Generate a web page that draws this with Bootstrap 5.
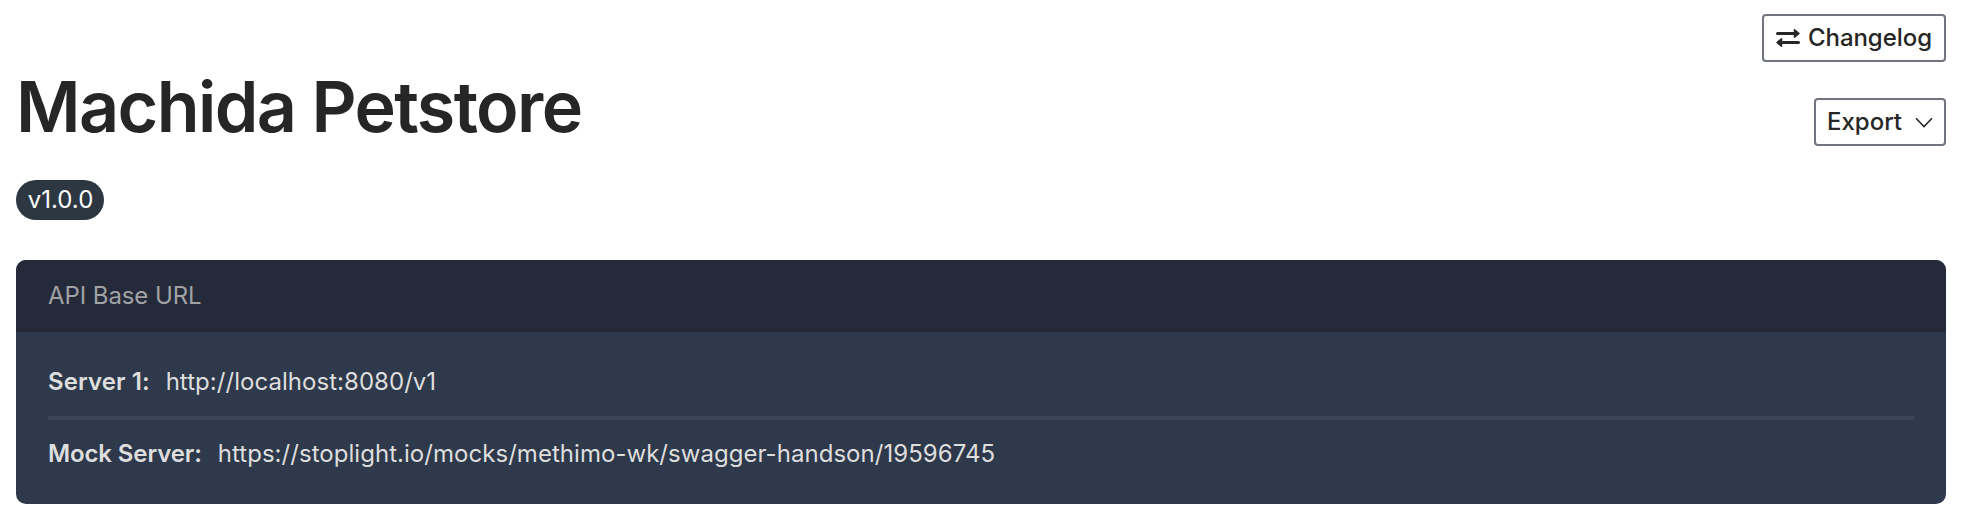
<!DOCTYPE html>
<html lang="en">
<head>
<meta charset="utf-8">
<title>Machida Petstore</title>
<link href="https://cdn.jsdelivr.net/npm/bootstrap@5.3.0/dist/css/bootstrap.min.css" rel="stylesheet">
<style>
body{font-family:Inter,"Liberation Sans",sans-serif;font-size:24px;color:#262626;line-height:36px;background:#fff}
.page{height:506px;padding:14px 20px 0 16px}
.tool{--bs-btn-color:#262626;--bs-btn-border-color:#707480;--bs-btn-border-width:2px;--bs-btn-border-radius:4px;--bs-btn-font-size:24px;--bs-btn-font-weight:500;height:48px;padding:0 10px;line-height:36px}
.changelog{width:184px;padding-right:12px;letter-spacing:-.05px}
.export{width:132px;margin-top:36px;padding-left:11px}
.heading{font-size:70px;font-weight:600;line-height:90px;height:88px;letter-spacing:-1.6px}
.version{font-size:24px;font-weight:400;line-height:40px;height:40px;width:88px;background:#2d3742;margin-top:30px;padding:0 0 0 1px}
.servers{margin-top:40px;height:244px;border-radius:10px;background:#2e394b;color:#dedede}
.servers-head{height:72px;padding:0 32px;background:#242a39;color:#a0a2a6;letter-spacing:-.08px}
.servers-body{padding:20px 32px}
.entry{height:60px}
.entry b{letter-spacing:.08px}
.entry span{letter-spacing:.04px}
.entry-mock b{letter-spacing:-.12px}
.rule{height:4px;background:#3b4557;margin:4px 0}
</style>
</head>
<body>
<main class="page">
<div class="d-flex justify-content-end"><button class="btn tool changelog d-flex align-items-center justify-content-between"><svg width="26" height="20" viewBox="0 0 26 20" fill="none" stroke="currentColor" stroke-width="3" stroke-linecap="round"><path d="M3.5 5.5H20M9 14.5h15.5"/><path fill="currentColor" stroke-width="1.500" stroke-linejoin="round" d="M20.500 1.800v7.400l4.500-3.700zM7.500 10.800v7.400l-4.500-3.700z"/></svg>Changelog</button></div>
<div class="d-flex justify-content-between align-items-start"><h1 class="heading m-0">Machida Petstore</h1><button class="btn tool export d-flex align-items-center justify-content-between">Export<svg width="20" height="20" viewBox="0 0 20 20" fill="none" stroke="currentColor" stroke-width="1.5"><path d="m2 6.200 8 8.400 8-8.400"/></svg></button></div>
<span class="version badge rounded-pill d-block">v1.0.0</span>
<section class="servers overflow-hidden"><div class="servers-head d-flex align-items-center">API Base URL</div><div class="servers-body"><div class="entry d-flex align-items-center gap-3"><b class="fw-semibold">Server 1:</b><span>http://localhost:8080/v1</span></div><div class="rule"></div><div class="entry entry-mock d-flex align-items-center gap-3"><b class="fw-semibold">Mock Server:</b><span>https://stoplight.io/mocks/methimo-wk/swagger-handson/19596745</span></div></div></section>
</main>
<script src="https://cdn.jsdelivr.net/npm/bootstrap@5.3.0/dist/js/bootstrap.bundle.min.js"></script>
</body>
</html>
